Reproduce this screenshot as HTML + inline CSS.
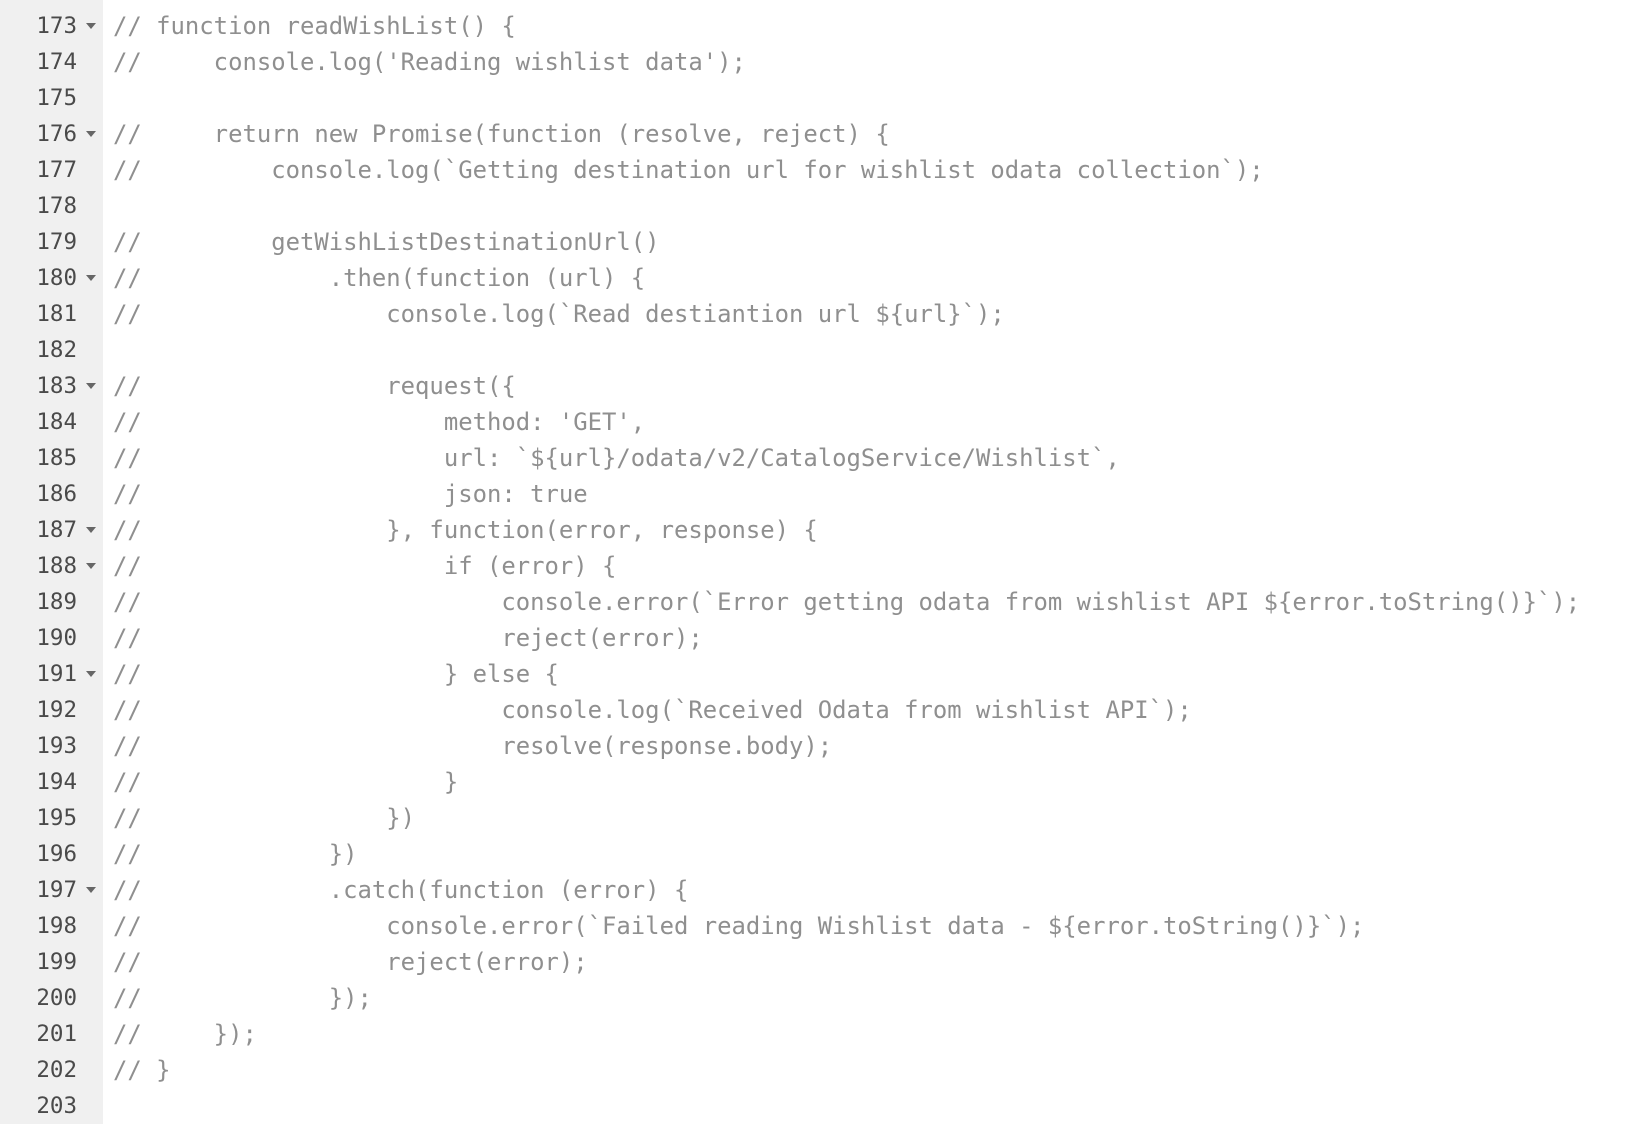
<!DOCTYPE html>
<html><head><meta charset="utf-8"><style>
html,body{margin:0;padding:0;background:#fff;width:1646px;height:1124px;overflow:hidden}
.g{position:absolute;left:0;top:0;width:103px;height:1124px;background:#f0f0f0}
.wrap{position:absolute;left:0;top:8px;font-family:"DejaVu Sans Mono","Liberation Mono",monospace;font-size:23.9px;line-height:36px}
.l{height:36px;white-space:pre;position:relative}
.n{position:absolute;left:0;width:77px;text-align:right;color:#4a4a4a;font-size:22.5px}
.a{position:absolute;left:86px;top:15px;width:0;height:0;border-left:5px solid transparent;border-right:5px solid transparent;border-top:6px solid #666}
.c{position:absolute;left:113px;color:#8f8f8f}
</style></head><body>
<div class="g"></div>
<div class="wrap">
<div class="l"><span class="n">173</span><span class="a"></span><span class="c">// function readWishList() {</span></div>
<div class="l"><span class="n">174</span><span class="c">//     console.log('Reading wishlist data');</span></div>
<div class="l"><span class="n">175</span></div>
<div class="l"><span class="n">176</span><span class="a"></span><span class="c">//     return new Promise(function (resolve, reject) {</span></div>
<div class="l"><span class="n">177</span><span class="c">//         console.log(`Getting destination url for wishlist odata collection`);</span></div>
<div class="l"><span class="n">178</span></div>
<div class="l"><span class="n">179</span><span class="c">//         getWishListDestinationUrl()</span></div>
<div class="l"><span class="n">180</span><span class="a"></span><span class="c">//             .then(function (url) {</span></div>
<div class="l"><span class="n">181</span><span class="c">//                 console.log(`Read destiantion url ${url}`);</span></div>
<div class="l"><span class="n">182</span></div>
<div class="l"><span class="n">183</span><span class="a"></span><span class="c">//                 request({</span></div>
<div class="l"><span class="n">184</span><span class="c">//                     method: 'GET',</span></div>
<div class="l"><span class="n">185</span><span class="c">//                     url: `${url}/odata/v2/CatalogService/Wishlist`,</span></div>
<div class="l"><span class="n">186</span><span class="c">//                     json: true</span></div>
<div class="l"><span class="n">187</span><span class="a"></span><span class="c">//                 }, function(error, response) {</span></div>
<div class="l"><span class="n">188</span><span class="a"></span><span class="c">//                     if (error) {</span></div>
<div class="l"><span class="n">189</span><span class="c">//                         console.error(`Error getting odata from wishlist API ${error.toString()}`);</span></div>
<div class="l"><span class="n">190</span><span class="c">//                         reject(error);</span></div>
<div class="l"><span class="n">191</span><span class="a"></span><span class="c">//                     } else {</span></div>
<div class="l"><span class="n">192</span><span class="c">//                         console.log(`Received Odata from wishlist API`);</span></div>
<div class="l"><span class="n">193</span><span class="c">//                         resolve(response.body);</span></div>
<div class="l"><span class="n">194</span><span class="c">//                     }</span></div>
<div class="l"><span class="n">195</span><span class="c">//                 })</span></div>
<div class="l"><span class="n">196</span><span class="c">//             })</span></div>
<div class="l"><span class="n">197</span><span class="a"></span><span class="c">//             .catch(function (error) {</span></div>
<div class="l"><span class="n">198</span><span class="c">//                 console.error(`Failed reading Wishlist data - ${error.toString()}`);</span></div>
<div class="l"><span class="n">199</span><span class="c">//                 reject(error);</span></div>
<div class="l"><span class="n">200</span><span class="c">//             });</span></div>
<div class="l"><span class="n">201</span><span class="c">//     });</span></div>
<div class="l"><span class="n">202</span><span class="c">// }</span></div>
<div class="l"><span class="n">203</span></div>
</div>
</body></html>
